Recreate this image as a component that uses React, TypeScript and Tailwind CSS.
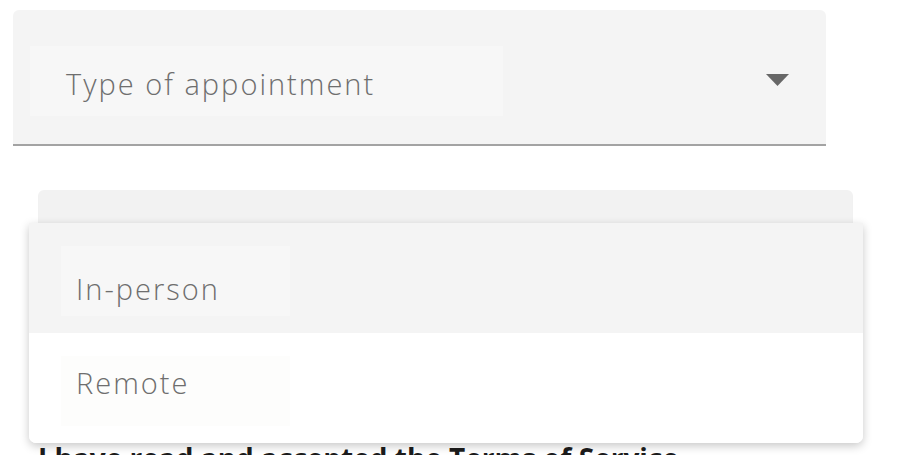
import { useState } from "react"

const options = [
  { label: "In-person", shift: "pt-[16px]" },
  { label: "Remote", shift: "pb-[16px]" },
]

const App = () => {
  const [selected] = useState("In-person")

  return (
    <div className="relative h-[455px] w-[910px] overflow-hidden bg-white font-['Open_Sans',sans-serif] text-[#6e6e6e]">
      <div className="ml-[13px] mt-[10px] flex h-[136px] w-[813px] items-start justify-between rounded-t-[6px] border-b-2 border-[#a3a3a3] bg-[#f4f4f4] pl-[17px] pr-[37px] pt-[36px]">
        <div className="flex h-[70px] w-[473px] items-center bg-[#f7f7f7] pl-[36px] pt-[5px] text-[29px] font-light tracking-[2px]">
          Type of appointment
        </div>
        <svg width="23" height="12" viewBox="0 0 23 12" className="mt-[28px]">
          <path d="M0 0 H23 L11.5 12 Z" fill="#676767" />
        </svg>
      </div>

      <div className="ml-[38px] mt-[44px] h-[90px] w-[815px] rounded-t-[6px] bg-[#f2f2f2] shadow-[inset_0_-6px_6px_-4px_rgba(0,0,0,0.06)]" />

      <p className="ml-[38px] mt-[163px] whitespace-nowrap text-[28px] font-bold leading-[30px] text-[#1c1c1c]">
        I have read and accepted the Terms of Service
      </p>

      <ul className="absolute left-[29px] top-[223px] w-[834px] overflow-hidden rounded-b-[7px] bg-white shadow-[0_3px_10px_rgba(0,0,0,0.22)]">
        {options.map((opt) => (
          <li
            key={opt.label}
            className={`flex h-[110px] items-start pl-[32px] pt-[23px] ${selected === opt.label ? "bg-[#f4f4f4]" : "bg-white"}`}
          >
            <span
              className={`flex h-[70px] w-[229px] items-center pl-[15px] text-[29px] font-light tracking-[2px] ${opt.shift} ${selected === opt.label ? "bg-[#f7f7f7]" : "bg-[#fdfdfc]"}`}
            >
              {opt.label}
            </span>
          </li>
        ))}
      </ul>
    </div>
  )
}

export default App
